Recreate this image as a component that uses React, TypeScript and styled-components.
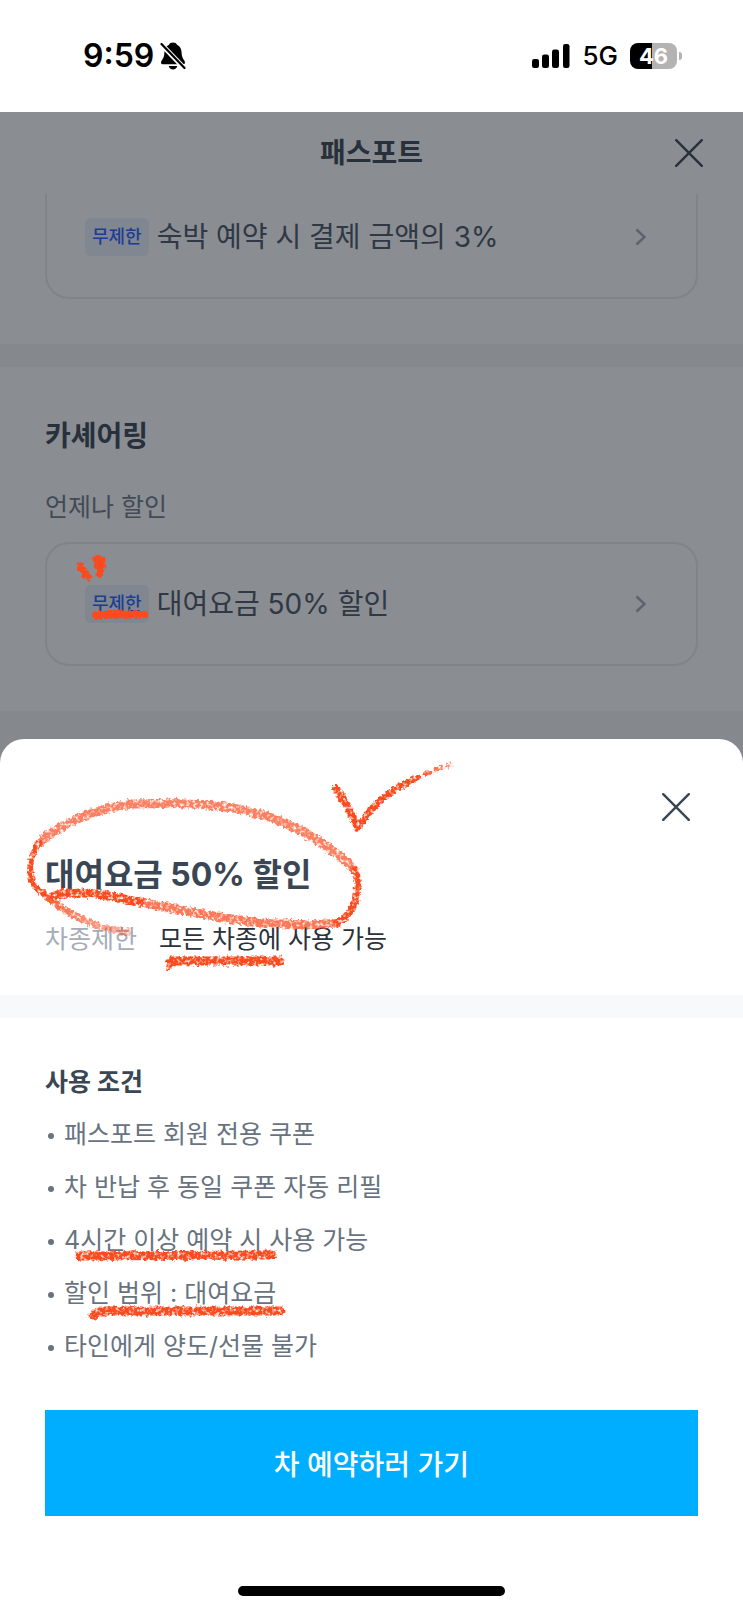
import React from "react";
import styled, { createGlobalStyle } from "styled-components";

const color = {
  ink: "#3a4653",
  body: "#68737f",
  muted: "#a6adb8",
  dim: "#8a8d92",
  dimBand: "#85888d",
  dimLine: "#808388",
  dimInk: "#27303b",
  dimBody: "#434a55",
  brand: "#00aeff",
  crayon: "#fa4a1e",
};

const GlobalStyle = createGlobalStyle`
  *, *::before, *::after { box-sizing: border-box; }
  body {
    margin: 0;
    background: #fff;
    font-family: Inter, "Noto Sans CJK KR", sans-serif;
  }
  h1, h2, h3, p, ul, dl, dt, dd { margin: 0; padding: 0; }
  button { font: inherit; border: 0; background: none; padding: 0; cursor: pointer; }
`;

const Screen = styled.div`
  display: flex;
  flex-direction: column;
  min-height: 100vh;
`;

/* Status bar */

const StatusBar = styled.header`
  display: flex;
  align-items: center;
  justify-content: space-between;
  height: 112px;
  padding: 0 61px 0 83px;
  color: #000;
`;

const StatusGroup = styled.div<{ $gap: number }>`
  display: flex;
  align-items: center;
  gap: ${(p) => p.$gap}px;
`;

const Clock = styled.time`
  font-size: 32px;
  font-weight: 600;
  line-height: 40px;
`;

const Network = styled.span`
  font-size: 26px;
  font-weight: 500;
  line-height: 36px;
`;

const Battery = styled.div`
  display: flex;
  align-items: center;
  gap: 2px;
`;

const BatteryBody = styled.div`
  width: 47px;
  height: 26px;
  border-radius: 8px;
  background: linear-gradient(to right, #000 46%, #b3b3b3 46%);
  color: #fff;
  font-size: 22px;
  font-weight: 700;
  line-height: 26px;
  text-align: center;
`;

const BatteryTip = styled.div`
  width: 3px;
  height: 8px;
  border-radius: 0 4px 4px 0;
  background: #b3b3b3;
`;

/* Page behind the sheet */

const Dimmed = styled.main`
  background: ${color.dim};
  color: ${color.dimInk};
`;

const AppBar = styled.div`
  display: grid;
  grid-template-columns: 44px 1fr 44px;
  align-items: center;
  height: 82px;
  padding: 0 32px;
`;

const AppTitle = styled.h1`
  grid-column: 2;
  font-size: 28px;
  font-weight: 700;
  line-height: 36px;
  text-align: center;
`;

const IconButton = styled.button`
  display: grid;
  place-items: center;
  width: 44px;
  height: 44px;
  color: inherit;
`;

const Section = styled.section<{ $top: number }>`
  padding: ${(p) => p.$top}px 45px 45px;
`;

const Band = styled.div<{ $dim?: boolean; $height: number }>`
  height: ${(p) => p.$height}px;
  background: ${(p) => (p.$dim ? color.dimBand : "#f7f9fb")};
`;

const SectionTitle = styled.h2`
  font-size: 28px;
  font-weight: 700;
  line-height: 36px;
`;

const SectionNote = styled.p`
  margin: 35px 0 17px;
  color: ${color.dimBody};
  font-size: 25px;
  line-height: 36px;
`;

const Coupon = styled.button<{ $clipped?: boolean }>`
  position: relative;
  display: flex;
  align-items: center;
  gap: 8px;
  width: 100%;
  padding: ${(p) => (p.$clipped ? 24 : 41)}px 49px 41px 38px;
  border: 2px solid ${color.dimLine};
  border-radius: 24px;
  ${(p) => p.$clipped && "border-top: 0; border-top-left-radius: 0; border-top-right-radius: 0;"}
  color: #2f3844;
  text-align: left;
`;

const Tag = styled.span`
  padding: 0 7px;
  border-radius: 6px;
  background: #808791;
  color: #1e3c92;
  font-size: 18px;
  font-weight: 500;
  line-height: 38px;
`;

const CouponName = styled.span`
  flex: 1;
  font-size: 28px;
  line-height: 38px;
`;

/* Bottom sheet */

const SheetBackdrop = styled.div`
  flex: 1;
  display: flex;
  background: linear-gradient(${color.dimBand} 0 40px, #fff 40px);
`;

const Sheet = styled.div`
  flex: 1;
  display: flex;
  flex-direction: column;
  border-radius: 24px 24px 0 0;
  background: #fff;
  color: ${color.ink};
`;

const SheetHead = styled.div`
  position: relative;
  display: flex;
  flex-direction: column;
  padding: 46px 45px 38px;

  ${IconButton} {
    align-self: flex-end;
  }
`;

const SheetTitle = styled.h2`
  margin: 24px 0;
  font-size: 32px;
  font-weight: 700;
  line-height: 44px;
`;

const Facts = styled.dl`
  display: flex;
  gap: 22px;
  font-size: 25px;
  line-height: 36px;

  dt { color: ${color.muted}; }
  dd { color: #2b323b; }
`;

const SheetBody = styled.div`
  display: flex;
  flex-direction: column;
  padding: 46px 45px 0;
`;

const TermsTitle = styled.h3`
  font-size: 25px;
  font-weight: 700;
  line-height: 36px;
`;

const Terms = styled.ul`
  display: flex;
  flex-direction: column;
  gap: 17px;
  margin: 16px 0 46px;
  list-style: none;
  color: ${color.body};
  font-size: 25px;
  line-height: 36px;
`;

const Term = styled.li`
  position: relative;
  display: flex;
  align-items: center;
  gap: 10px;
  padding-left: 3px;

  &::before {
    content: "";
    width: 6px;
    height: 6px;
    margin-top: 3px;
    border-radius: 50%;
    background: currentColor;
  }
`;

const ReserveButton = styled.button`
  height: 106px;
  background: ${color.brand};
  color: #fff;
  font-size: 28px;
  font-weight: 500;
`;

const HomeIndicator = styled.div`
  width: 36%;
  height: 10px;
  margin: 70px auto 15px;
  border-radius: 5px;
  background: #000;
`;

/* Crayon notes drawn over the content */

const Ink = styled.svg<{ $x: number; $y: number }>`
  position: absolute;
  left: ${(p) => p.$x}px;
  top: ${(p) => p.$y}px;
  overflow: visible;
  pointer-events: none;
  fill: none;
  stroke: ${color.crayon};
  stroke-linecap: round;
  stroke-linejoin: round;
`;

type CrayonProps = { id: string; y?: number; grain?: boolean };

const CrayonFilter = ({ id, y = -20, grain = true }: CrayonProps) => (
  <filter id={id} x="-20" y={y} width="520" height="280" filterUnits="userSpaceOnUse" colorInterpolationFilters="sRGB">
    <feTurbulence type="fractalNoise" baseFrequency="0.3" numOctaves="2" seed="4" result="noise" />
    <feDisplacementMap in="SourceGraphic" in2="noise" scale="6" xChannelSelector="R" yChannelSelector="G" result="rough" />
    <feColorMatrix
      in="noise"
      type="matrix"
      values={`0 0 0 0 0  0 0 0 0 0  0 0 0 0 0  0 0 ${grain ? "3 0 -0.55" : "0 0 1"}`}
      result="mask"
    />
    <feComposite in="rough" in2="mask" operator="in" />
    <feGaussianBlur stdDeviation="0.6" />
  </filter>
);

const CouponInk = () => (
  <Ink $x={28} $y={8} width="80" height="74" viewBox="0 0 80 74" aria-hidden="true">
    <defs>
      <CrayonFilter id="crayon-coupon" grain={false} />
    </defs>
    <g filter="url(#crayon-coupon)" strokeWidth="7">
      <path d="M5 14 L13 25" />
      <path d="M21 7 L27 8 L25 22" />
      <path d="M22 11 L25 19" />
      <path d="M22 63 L69 62" strokeWidth="8" />
    </g>
  </Ink>
);

const HeadInk = () => (
  <Ink $x={0} $y={0} width="480" height="256" viewBox="0 739 480 256" aria-hidden="true">
    <defs>
      <CrayonFilter id="crayon-head" y={730} />
      <linearGradient id="tail" gradientUnits="userSpaceOnUse" x1="45" y1="893" x2="130" y2="932">
        <stop offset="0" stopColor={color.crayon} stopOpacity="0.9" />
        <stop offset="1" stopColor={color.crayon} stopOpacity="0.4" />
      </linearGradient>
      <linearGradient id="flick" gradientUnits="userSpaceOnUse" x1="414" y1="779" x2="452" y2="764">
        <stop offset="0" stopColor={color.crayon} />
        <stop offset="1" stopColor={color.crayon} stopOpacity="0.6" />
      </linearGradient>
    </defs>
    <g filter="url(#crayon-head)">
      <path d="M53 897 C62 892 72 893 82 893 C102 893 120 899 140 902" strokeWidth="9" />
      <path
        d="M140 902 L187 911 C203 914 217 917 233 919 C250 922 267 924 283 924 C303 925 320 925 337 923"
        strokeWidth="9"
        strokeOpacity="0.75"
      />
      <path d="M337 923 C349 916 354 908 356 895 C359 883 358 878 354 869" strokeWidth="7" />
      <path
        d="M354 869 C343 857 320 841 300 830 C280 820 258 812 233 808 C200 803 166 803 133 804 C113 806 96 811 80 818 C62 826 50 832 40 843"
        strokeWidth="9"
        strokeOpacity="0.7"
      />
      <path d="M40 843 C33 851 30 860 30 870 C30 881 34 888 44 894" strokeWidth="6" />
      <path d="M44 894 C54 903 62 909 74 915 C90 924 108 930 127 932" strokeWidth="7" stroke="url(#tail)" />
      <path d="M171 961 L280 961" strokeWidth="9" />
      <path d="M169 967 L171 960" strokeWidth="6" />
      <path d="M336 789 L345 802 L358 827" strokeWidth="8" />
      <path d="M358 828 C366 815 374 805 384 798 C394 789 404 784 414 779" strokeWidth="7" />
      <path d="M414 779 C426 774 438 769 450 765" strokeWidth="5" stroke="url(#flick)" strokeDasharray="5 7" />
    </g>
  </Ink>
);

const TermInk = ({ id, x, d }: { id: string; x: number; d: string }) => (
  <Ink $x={x} $y={24} width="210" height="20" viewBox="0 0 210 20" aria-hidden="true">
    <defs>
      <CrayonFilter id={id} />
    </defs>
    <path d={d} strokeWidth="9" filter={`url(#${id})`} />
  </Ink>
);

/* Icons */

const CloseIcon = () => (
  <svg width="28" height="28" viewBox="0 0 28 28" fill="none" stroke="currentColor" strokeWidth="2.4" strokeLinecap="round" aria-hidden="true">
    <path d="M1.2 1.2 26.8 26.8M26.8 1.2 1.2 26.8" />
  </svg>
);

const ChevronIcon = () => (
  <svg width="12" height="18" viewBox="0 0 12 18" fill="none" stroke="#5d626b" strokeWidth="2.4" aria-hidden="true">
    <path d="M1.5 1.5 9.5 9 1.5 16.5" />
  </svg>
);

const MutedBellIcon = () => (
  <svg width="26" height="28" viewBox="0 0 26 28" aria-hidden="true">
    <path
      d="M13 .5C15 .5 16.4 1.400 17 2.700C20 4 21.500 6.700 21.600 10.500C21.700 14.500 22.800 16.300 24.300 18.500C25.600 20.500 25 22.300 23.200 22.300H2.800C1 22.300 .4 20.500 1.700 18.500C3.200 16.300 4.300 14.500 4.400 10.500C4.500 6.700 6 4 9 2.700C9.600 1.400 11 .5 13 .5Z"
      fill="#000"
    />
    <path d="M8.8 24h8.400c-.4 2-2.100 3.500-4.200 3.500S9.200 26 8.800 24z" fill="#000" />
    <path d="M0 1 25 27" stroke="#fff" strokeWidth="5" />
    <path d="M1.500 2 24.500 26" stroke="#000" strokeWidth="2.2" strokeLinecap="round" />
  </svg>
);

const SignalIcon = () => (
  <svg width="38" height="24" viewBox="0 0 38 24" aria-hidden="true">
    <rect x="0" y="15" width="7" height="9" rx="2.2" />
    <rect x="10" y="10.5" width="7" height="13.5" rx="2.2" />
    <rect x="20" y="5.5" width="7" height="18.5" rx="2.2" />
    <rect x="31" y="0" width="6.5" height="24" rx="2.2" />
  </svg>
);

export default function App() {
  return (
    <>
      <GlobalStyle />
      <Screen>
        <StatusBar>
          <StatusGroup $gap={6}>
            <Clock>9:59</Clock>
            <MutedBellIcon />
          </StatusGroup>
          <StatusGroup $gap={12}>
            <SignalIcon />
            <Network>5G</Network>
            <Battery>
              <BatteryBody>46</BatteryBody>
              <BatteryTip />
            </Battery>
          </StatusGroup>
        </StatusBar>

        <Dimmed>
          <AppBar>
            <AppTitle>패스포트</AppTitle>
            <IconButton type="button" aria-label="닫기">
              <CloseIcon />
            </IconButton>
          </AppBar>

          <Section $top={0}>
            <Coupon type="button" $clipped>
              <Tag>무제한</Tag>
              <CouponName>숙박 예약 시 결제 금액의 3%</CouponName>
              <ChevronIcon />
            </Coupon>
          </Section>
          <Band $dim $height={23} />

          <Section $top={51}>
            <SectionTitle>카셰어링</SectionTitle>
            <SectionNote>언제나 할인</SectionNote>
            <Coupon type="button">
              <Tag>무제한</Tag>
              <CouponName>대여요금 50% 할인</CouponName>
              <ChevronIcon />
              <CouponInk />
            </Coupon>
          </Section>
          <Band $dim $height={28} />
        </Dimmed>

        <SheetBackdrop>
          <Sheet role="dialog" aria-labelledby="sheet-title">
            <SheetHead>
              <IconButton type="button" aria-label="닫기">
                <CloseIcon />
              </IconButton>
              <SheetTitle id="sheet-title">대여요금 50% 할인</SheetTitle>
              <Facts>
                <dt>차종제한</dt>
                <dd>모든 차종에 사용 가능</dd>
              </Facts>
              <HeadInk />
            </SheetHead>
            <Band $height={23} />
            <SheetBody>
              <TermsTitle>사용 조건</TermsTitle>
              <Terms>
                <Term>패스포트 회원 전용 쿠폰</Term>
                <Term>차 반납 후 동일 쿠폰 자동 리필</Term>
                <Term>
                  4시간 이상 예약 시 사용 가능
                  <TermInk id="crayon-hours" x={29} d="M5 10 L198 9" />
                </Term>
                <Term>
                  할인 범위 : 대여요금
                  <TermInk id="crayon-range" x={44} d="M4 17 L10 12 L192 12" />
                </Term>
                <Term>타인에게 양도/선물 불가</Term>
              </Terms>
              <ReserveButton type="button">차 예약하러 가기</ReserveButton>
            </SheetBody>
            <HomeIndicator />
          </Sheet>
        </SheetBackdrop>
      </Screen>
    </>
  );
}
